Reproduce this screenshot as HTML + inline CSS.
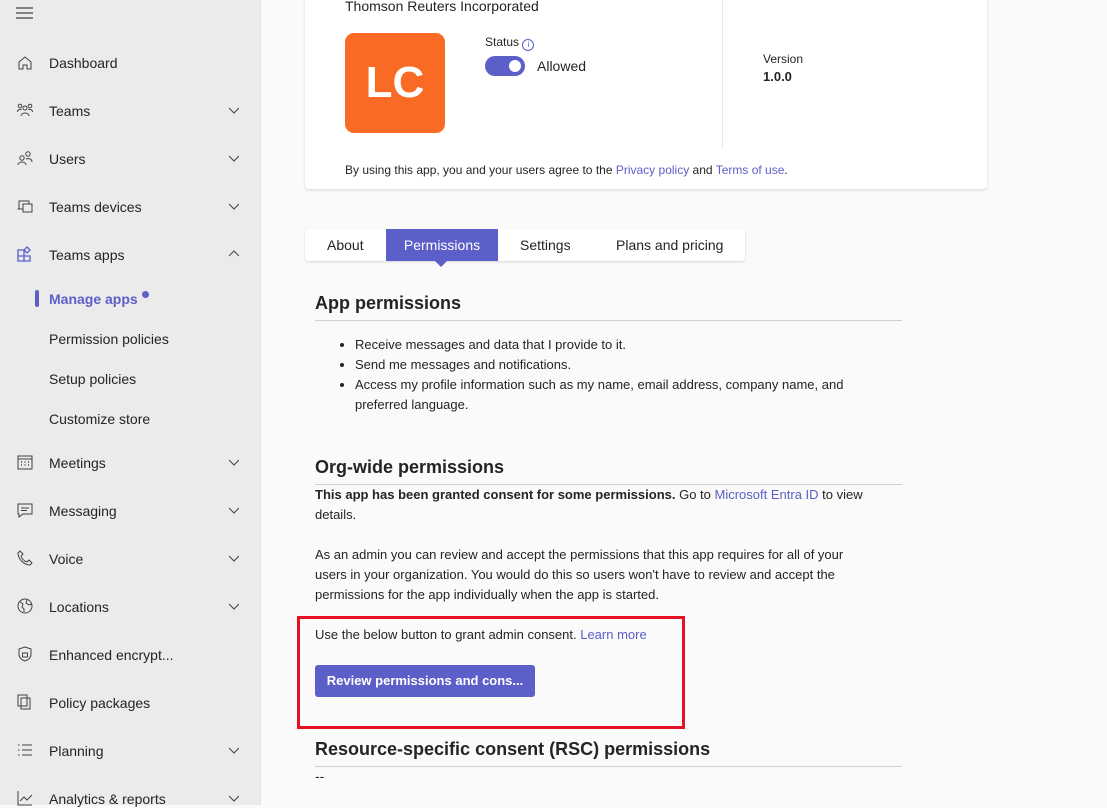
<!DOCTYPE html><html><head><style>
body{margin:0;width:1107px;height:805px;overflow:hidden;font-family:"Liberation Sans",sans-serif;background:#fafafa;color:#242424;position:relative}
.sb{position:absolute;left:0;top:0;width:260px;height:805px;background:#ebebeb;border-right:1px solid #e0e0e0}
.it{position:absolute;left:49px;font-size:14px;color:#242424;line-height:18px}
.ic{position:absolute;left:17px;width:16px;height:16px}
.ch{position:absolute;left:229px;width:10px;height:10px}
.a{color:#5b5fc7;text-decoration:none}
.card{position:absolute;left:305px;top:-10px;width:682px;height:199px;background:#fff;border-radius:4px;box-shadow:0 1px 3px rgba(0,0,0,.15)}
p,li{font-size:13px;line-height:20px;margin:0}
h2{font-size:18px;font-weight:bold;margin:0;position:absolute;left:315px}
.hr{position:absolute;left:315px;width:587px;height:1px;background:#d1d1d1}
</style></head><body>
<div class="sb">
<svg style="position:absolute;left:16px;top:7px" width="18" height="12"><path d="M0 1h17M0 6h17M0 11h17" stroke="#424242" stroke-width="1.2"/></svg>
<svg class="ic" style="top:55px" viewBox="0 0 16 16"><path d="M2 7l6-5 6 5v7h-4v-4H6v4H2z" fill="none" stroke="#424242"/></svg><div class="it" style="top:54px">Dashboard</div>
<svg class="ic" style="top:102px" viewBox="0 0 16 16"><circle cx="3" cy="4" r="1.8" fill="none" stroke="#424242"/><circle cx="13" cy="4" r="1.8" fill="none" stroke="#424242"/><circle cx="8" cy="6" r="2" fill="none" stroke="#424242"/><path d="M4 14c0-4 8-4 8 0M0.5 10c0-3 4-3 4-2M15.5 10c0-3-4-3-4-2" fill="none" stroke="#424242"/></svg><div class="it" style="top:102px">Teams</div>
<svg class="ic" style="top:150px" viewBox="0 0 16 16"><circle cx="5" cy="8" r="2.2" fill="none" stroke="#424242"/><circle cx="11" cy="4" r="2.2" fill="none" stroke="#424242"/><path d="M1 15c0-4 8-4 8 0M9 9c3-1 6 0 6 3" fill="none" stroke="#424242"/></svg><div class="it" style="top:150px">Users</div>
<svg class="ic" style="top:198px" viewBox="0 0 16 16"><path d="M2 11V3h10v3M0.5 11h5M6 6h9v8H6z" fill="none" stroke="#424242"/></svg><div class="it" style="top:198px">Teams devices</div>
<svg class="ic" style="top:246px" viewBox="0 0 16 16"><path d="M1 4h6v6H1zM1 10h6v5H1zM7 10h6v5H7zM10 1l3 3-3 3-3-3z" fill="none" stroke="#5b5fc7" stroke-width="1.3"/></svg><div class="it" style="top:246px">Teams apps</div>
<div style="position:absolute;left:35px;top:290px;width:4px;height:17px;background:#5b5fc7;border-radius:2px"></div>
<div class="it" style="top:290px;color:#5b5fc7;font-weight:bold">Manage apps <span style="display:inline-block;width:7px;height:7px;border-radius:50%;background:#5b5fc7;vertical-align:6px"></span></div>
<div class="it" style="top:330px">Permission policies</div>
<div class="it" style="top:370px">Setup policies</div>
<div class="it" style="top:410px">Customize store</div>
<svg class="ic" style="top:454px" viewBox="0 0 16 16"><path d="M1 2h14v13H1zM1 5h14" fill="none" stroke="#424242"/><path d="M4 8h1M7.5 8h1M11 8h1M4 11h1M7.5 11h1M11 11h1" stroke="#424242" stroke-width="1.5"/></svg><div class="it" style="top:454px">Meetings</div>
<svg class="ic" style="top:502px" viewBox="0 0 16 16"><path d="M1 2h14v10H6l-4 3v-3H1z" fill="none" stroke="#424242"/><path d="M4 6h8M4 8.5h6" stroke="#424242"/></svg><div class="it" style="top:502px">Messaging</div>
<svg class="ic" style="top:550px" viewBox="0 0 16 16"><path d="M3 1l3 3-2 2c1 3 3 5 6 6l2-2 3 3-2 2C7 15 1 9 1 3z" fill="none" stroke="#424242"/></svg><div class="it" style="top:550px">Voice</div>
<svg class="ic" style="top:598px" viewBox="0 0 16 16"><circle cx="8" cy="8" r="7" fill="none" stroke="#424242"/><path d="M3 4l3 2-1 3 2 2v3M10 2l-1 3 3 2 3-1" fill="none" stroke="#424242"/></svg><div class="it" style="top:598px">Locations</div>
<svg class="ic" style="top:646px" viewBox="0 0 16 16"><path d="M8 1l6 2v5c0 4-3 6-6 7-3-1-6-3-6-7V3z" fill="none" stroke="#424242"/><rect x="5.5" y="7" width="5" height="4" fill="none" stroke="#424242"/></svg><div class="it" style="top:646px">Enhanced encrypt...</div>
<svg class="ic" style="top:694px" viewBox="0 0 16 16"><path d="M1 1h9v11H1zM4 4h9v11H4z" fill="none" stroke="#424242"/></svg><div class="it" style="top:694px">Policy packages</div>
<svg class="ic" style="top:742px" viewBox="0 0 16 16"><path d="M5 3h10M5 8h10M5 13h10M1 3h1.5M1 8h1.5M1 13h1.5" stroke="#424242"/></svg><div class="it" style="top:742px">Planning</div>
<svg class="ic" style="top:790px" viewBox="0 0 16 16"><path d="M1 1v14h14M3 11l4-4 3 3 5-5" fill="none" stroke="#424242"/></svg><div class="it" style="top:790px">Analytics &amp; reports</div>
<svg class="ch" style="top:106px"><path d="M0 2l5 5 5-5" fill="none" stroke="#424242"/></svg>
<svg class="ch" style="top:154px"><path d="M0 2l5 5 5-5" fill="none" stroke="#424242"/></svg>
<svg class="ch" style="top:202px"><path d="M0 2l5 5 5-5" fill="none" stroke="#424242"/></svg>
<svg class="ch" style="top:249px"><path d="M0 7l5-5 5 5" fill="none" stroke="#424242"/></svg>
<svg class="ch" style="top:458px"><path d="M0 2l5 5 5-5" fill="none" stroke="#424242"/></svg>
<svg class="ch" style="top:506px"><path d="M0 2l5 5 5-5" fill="none" stroke="#424242"/></svg>
<svg class="ch" style="top:554px"><path d="M0 2l5 5 5-5" fill="none" stroke="#424242"/></svg>
<svg class="ch" style="top:602px"><path d="M0 2l5 5 5-5" fill="none" stroke="#424242"/></svg>
<svg class="ch" style="top:746px"><path d="M0 2l5 5 5-5" fill="none" stroke="#424242"/></svg>
<svg class="ch" style="top:794px"><path d="M0 2l5 5 5-5" fill="none" stroke="#424242"/></svg>
</div>
<div class="card">
<div style="position:absolute;left:40px;top:8px;font-size:14px">Thomson Reuters Incorporated</div>
<div style="position:absolute;left:40px;top:43px;width:100px;height:100px;background:#f96b24;border-radius:9px;color:#fff;font-size:44px;font-weight:bold;text-align:center;line-height:100px">LC</div>
<div style="position:absolute;left:180px;top:45px;font-size:12px">Status <span style="display:inline-block;width:10px;height:10px;border:1px solid #5b5fc7;border-radius:50%;font-size:8px;color:#5b5fc7;text-align:center;line-height:10px;vertical-align:-1px">i</span></div>
<div style="position:absolute;left:180px;top:66px;width:40px;height:20px;background:#5b5fc7;border-radius:10px"><div style="position:absolute;right:4px;top:4px;width:12px;height:12px;background:#fff;border-radius:50%"></div></div>
<div style="position:absolute;left:232px;top:68px;font-size:14px">Allowed</div>
<div style="position:absolute;left:417px;top:0;width:1px;height:158px;background:#e6e6e6"></div>
<div style="position:absolute;left:458px;top:62px;font-size:12px">Version</div>
<div style="position:absolute;left:458px;top:79px;font-size:13px;font-weight:bold">1.0.0</div>
<div style="position:absolute;left:40px;top:173px;font-size:12px">By using this app, you and your users agree to the <span class="a">Privacy policy</span> and <span class="a">Terms of use</span>.</div>
</div>
<div style="position:absolute;left:305px;top:229px;width:440px;height:32px;background:#fff;border-radius:3px;box-shadow:0 1px 2px rgba(0,0,0,.15);font-size:14px">
<span style="position:absolute;left:22px;top:8px">About</span>
<div style="position:absolute;left:81px;top:0;width:112px;height:32px;background:#5b5fc7;color:#fff;text-align:center;line-height:32px">Permissions</div>
<div style="position:absolute;left:130px;top:32px;width:0;height:0;border-left:6px solid transparent;border-right:6px solid transparent;border-top:6px solid #5b5fc7"></div>
<span style="position:absolute;left:215px;top:8px">Settings</span>
<span style="position:absolute;left:311px;top:8px">Plans and pricing</span>
</div>
<h2 style="top:293px">App permissions</h2><div class="hr" style="top:320px"></div>
<ul style="position:absolute;left:315px;top:335px;margin:0;padding-left:40px;width:540px">
<li>Receive messages and data that I provide to it.</li><li>Send me messages and notifications.</li><li>Access my profile information such as my name, email address, company name, and preferred language.</li></ul>
<h2 style="top:457px">Org-wide permissions</h2><div class="hr" style="top:484px"></div>
<div style="position:absolute;left:315px;top:485px;width:560px">
<p><b>This app has been granted consent for some permissions.</b> Go to <span class="a">Microsoft Entra ID</span> to view details.</p>
<p style="margin-top:20px">As an admin you can review and accept the permissions that this app requires for all of your users in your organization. You would do this so users won't have to review and accept the permissions for the app individually when the app is started.</p>
<p style="margin-top:20px">Use the below button to grant admin consent. <span class="a">Learn more</span></p></div>
<div style="position:absolute;left:315px;top:665px;width:220px;height:32px;background:#5b5fc7;border-radius:3px;color:#fff;font-size:13px;font-weight:bold;line-height:32px;text-align:center">Review permissions and cons...</div>
<div style="position:absolute;left:297px;top:616px;width:382px;height:107px;border:3px solid #e81123"></div>
<h2 style="top:739px">Resource-specific consent (RSC) permissions</h2><div class="hr" style="top:766px"></div>
<div style="position:absolute;left:315px;top:768px;font-size:14px">--</div>
</body></html>
